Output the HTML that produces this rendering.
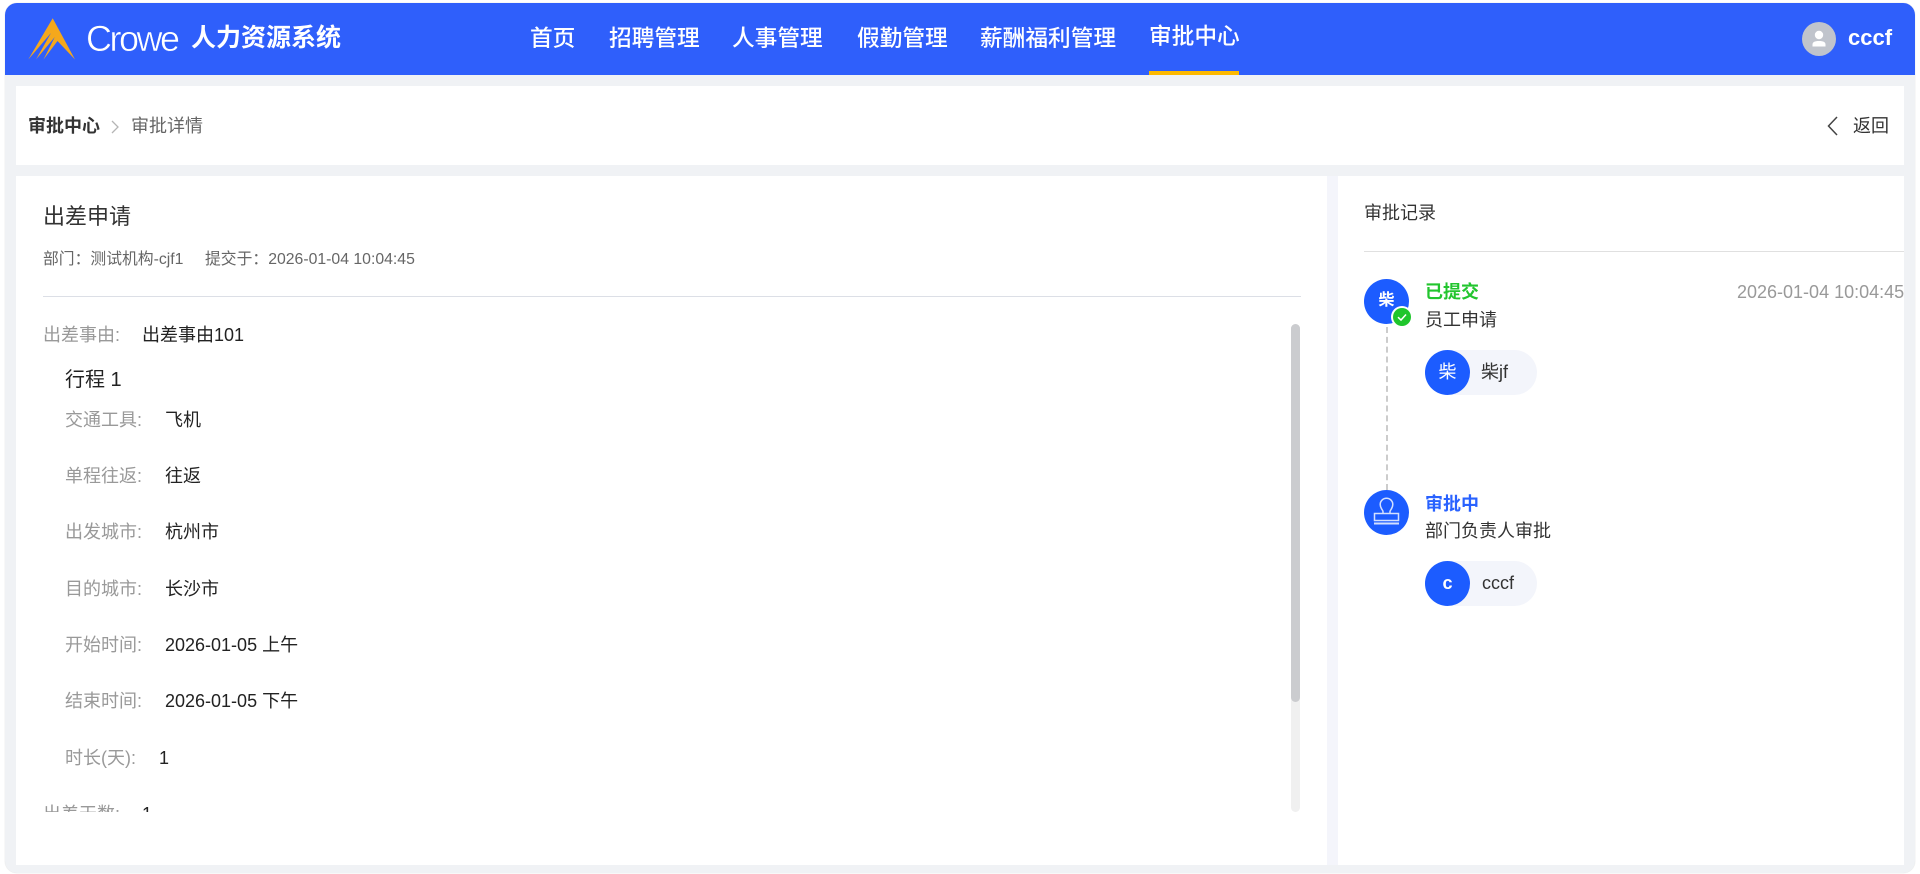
<!DOCTYPE html>
<html lang="zh"><head><meta charset="utf-8"><title>审批详情</title>
<style>
*{box-sizing:border-box}
html,body{margin:0;padding:0;width:1920px;height:874px;overflow:hidden;background:#fff}
body{font-family:"Liberation Sans","Noto Sans CJK SC",sans-serif;color:#333}
.a{position:absolute;white-space:nowrap;line-height:1}
#frame{position:absolute;left:5px;top:3px;width:1910px;height:870px;background:#f0f2f5;border-radius:12px;overflow:hidden;box-shadow:0 0 1px rgba(0,0,0,.2)}
#head{position:absolute;left:5px;top:3px;width:1910px;height:72px;background:#2f5ffb;border-radius:12px 12px 0 0}
.nav{font-size:22.700px;font-weight:500;color:#fff;top:27px}
.card{position:absolute;background:#fff}
.lb{color:#999;font-size:18px}
.v{color:#222;font-size:18px}
.pill{position:absolute;left:1425px;width:112px;height:45px;border-radius:23px;background:#f3f5fb}
.circ{position:absolute;border-radius:50%;background:#1c5cff;color:#fff;text-align:center}
</style></head><body>
<div id="frame"></div>
<div id="head"></div>
<svg class="a" style="left:20px;top:10px" width="70" height="56" viewBox="20 10 70 56">
<path fill="#f5a81c" d="M52.700 18.300 L75 59.500 L57.500 41 L43.500 59.500 L54.800 37 L36 59.500 L51 33 L28.300 59.500 Z"/>
</svg>
<div class="a" style="left:86px;top:21px;font-size:36px;color:#fff;letter-spacing:-2.500px;line-height:36px;-webkit-text-stroke:.5px #2f5ffb">Crowe</div>
<div class="a" style="left:191px;top:26px;font-size:25px;font-weight:700;color:#fff">人力资源系统</div>
<div class="a nav" style="left:530px">首页</div>
<div class="a nav" style="left:609px">招聘管理</div>
<div class="a nav" style="left:732px">人事管理</div>
<div class="a nav" style="left:857px">假勤管理</div>
<div class="a nav" style="left:980px">薪酬福利管理</div>
<div class="a nav" style="left:1149px;top:25px">审批中心</div>
<div class="a" style="left:1149px;top:71px;width:90px;height:4px;background:#fdb900"></div>
<div class="a" style="left:1802px;top:22px;width:34px;height:34px;border-radius:50%;background:#c0c4cc"></div>
<svg class="a" style="left:1802px;top:22px" width="34" height="34" viewBox="0 0 34 34"><circle cx="17" cy="13" r="4.200" fill="#fff"/><path fill="#fff" d="M10.500 24.500v-2c0-2.200 2-3.500 6.500-3.500s6.500 1.300 6.500 3.500v2z"/></svg>
<div class="a" style="left:1848px;top:27px;font-size:22px;font-weight:700;color:#fff">cccf</div>

<div class="card" style="left:16px;top:86px;width:1888px;height:79px"></div>
<div class="a" style="left:28px;top:117px;font-size:18px;font-weight:700;color:#333">审批中心</div>
<svg class="a" style="left:109px;top:118px" width="12" height="18" viewBox="0 0 12 18"><path d="M3 3l6 6-6 6" fill="none" stroke="#b5b5b5" stroke-width="1.300"/></svg>
<div class="a" style="left:131px;top:117px;font-size:18px;color:#666">审批详情</div>
<svg class="a" style="left:1825px;top:115px" width="16" height="22" viewBox="0 0 16 22"><path d="M12 2L3.500 11 12 20" fill="none" stroke="#444" stroke-width="1.500"/></svg>
<div class="a" style="left:1853px;top:117px;font-size:18px;color:#333">返回</div>

<div class="card" style="left:16px;top:176px;width:1311px;height:689px"></div>
<div class="a" style="left:1327px;top:176px;width:11px;height:689px;background:#f4f5fb"></div>
<div class="card" style="left:1338px;top:176px;width:566px;height:689px"></div>

<div class="a" style="left:43px;top:206px;font-size:22px;color:#333">出差申请</div>
<div class="a" style="left:43px;top:252px;font-size:15.800px;color:#666">部门：测试机构-cjf1</div>
<div class="a" style="left:205px;top:252px;font-size:15.800px;color:#666">提交于：2026-01-04 10:04:45</div>
<div class="a" style="left:43px;top:296px;width:1258px;height:1px;background:#dcdfe6"></div>

<div class="a lb" style="left:43px;top:326px">出差事由:</div><div class="a v" style="left:142px;top:326px">出差事由101</div>
<div class="a" style="left:65px;top:370px;font-size:20px;color:#222">行程 1</div>
<div class="a lb" style="left:65px;top:411px">交通工具:</div><div class="a v" style="left:165px;top:411px">飞机</div>
<div class="a lb" style="left:65px;top:467px">单程往返:</div><div class="a v" style="left:165px;top:467px">往返</div>
<div class="a lb" style="left:65px;top:523px">出发城市:</div><div class="a v" style="left:165px;top:523px">杭州市</div>
<div class="a lb" style="left:65px;top:580px">目的城市:</div><div class="a v" style="left:165px;top:580px">长沙市</div>
<div class="a lb" style="left:65px;top:636px">开始时间:</div><div class="a v" style="left:165px;top:636px">2026-01-05 上午</div>
<div class="a lb" style="left:65px;top:692px">结束时间:</div><div class="a v" style="left:165px;top:692px">2026-01-05 下午</div>
<div class="a lb" style="left:65px;top:749px">时长(天):</div><div class="a v" style="left:159px;top:749px">1</div>
<div class="a" style="left:40px;top:790px;width:300px;height:22px;overflow:hidden">
<div class="a lb" style="left:3px;top:15px">出差天数:</div><div class="a v" style="left:102px;top:15px">1</div></div>

<div class="a" style="left:1291px;top:324px;width:9px;height:488px;border-radius:5px;background:#f0f0f0"></div>
<div class="a" style="left:1291px;top:324px;width:9px;height:378px;border-radius:5px;background:#cbcccf"></div>

<div class="a" style="left:1364px;top:204px;font-size:18px;color:#333">审批记录</div>
<div class="a" style="left:1364px;top:251px;width:540px;height:1px;background:#e0e0e0"></div>

<div class="a" style="left:1386px;top:327px;width:0;height:163px;border-left:2px dashed #ccc"></div>
<div class="circ" style="left:1364px;top:279px;width:45px;height:45px;font-size:16px;font-weight:700;line-height:44px">柴</div>
<div class="a" style="left:1391px;top:306px;width:22px;height:22px;border-radius:50%;background:#fff"></div>
<svg class="a" style="left:1393px;top:308px" width="18" height="18" viewBox="0 0 18 18"><circle cx="9" cy="9" r="9" fill="#1fc62c"/><path d="M5 9.200l3 2.800 5-5.500" fill="none" stroke="#fff" stroke-width="1.500"/></svg>
<div class="a" style="left:1425px;top:283px;font-size:18px;font-weight:700;color:#22c52e">已提交</div>
<div class="a" style="left:1737px;top:283px;font-size:18px;color:#999">2026-01-04 10:04:45</div>
<div class="a" style="left:1425px;top:311px;font-size:18px;color:#333">员工申请</div>
<div class="pill" style="top:350px"></div>
<div class="circ" style="left:1425px;top:350px;width:45px;height:45px;font-size:18px;line-height:44px">柴</div>
<div class="a" style="left:1481px;top:363px;font-size:18px;color:#333">柴jf</div>

<div class="circ" style="left:1364px;top:490px;width:45px;height:45px"></div>
<svg class="a" style="left:1360px;top:485px" width="56" height="56" viewBox="0 0 56 56" fill="none" stroke="#d3e0ff" stroke-width="1.500"><path d="M23 28.500v-2c0-1.500-2.800-3-2.800-7a6.300 6.300 0 0 1 12.600 0c0 4-2.800 5.500-2.800 7v2"/><path d="M14.500 28.500h24v7h-24z"/><path d="M14 38.500h25" stroke-width="2"/></svg>
<div class="a" style="left:1425px;top:495px;font-size:18px;font-weight:700;color:#2962ff">审批中</div>
<div class="a" style="left:1425px;top:522px;font-size:18px;color:#333">部门负责人审批</div>
<div class="pill" style="top:561px"></div>
<div class="circ" style="left:1425px;top:561px;width:45px;height:45px;font-size:18px;font-weight:700;line-height:45px">c</div>
<div class="a" style="left:1482px;top:574px;font-size:18px;color:#333">cccf</div>
</body></html>
